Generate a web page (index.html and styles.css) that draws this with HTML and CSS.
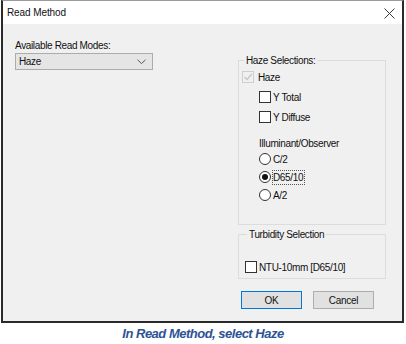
FILE: index.html
```html
<!DOCTYPE html>
<html>
<head>
<meta charset="utf-8">
<link rel="stylesheet" href="styles.css">
</head>
<body>
<div class="dialog">
  <div class="titlebar">
    <span class="title">Read Method</span>
    <svg class="close" width="11" height="11" viewBox="0 0 11 11"><path d="M0.5 0.5 L10.5 10.5 M10.5 0.5 L0.5 10.5" stroke="#3a3a3a" stroke-width="1" fill="none"/></svg>
  </div>
  <div class="content">
    <div class="main">
      <div class="left">
        <div class="label">Available Read Modes:</div>
        <div class="select">
          <span>Haze</span>
          <svg width="9" height="6" viewBox="0 0 9 6"><path d="M0.5 0.8 L4.5 4.6 L8.5 0.8" stroke="#555" stroke-width="1" fill="none"/></svg>
        </div>
      </div>
      <div class="right">
        <fieldset class="group haze">
          <legend>Haze Selections:</legend>
          <div class="row">
            <span class="box disabled"><svg width="10" height="10" viewBox="0 0 10 10"><path d="M1.5 5 L4 7.5 L8.8 2" stroke="#c4c4c4" stroke-width="1.2" fill="none"/></svg></span>
            <span class="text muted">Haze</span>
          </div>
          <div class="row sub">
            <span class="box"></span><span class="text">Y Total</span>
          </div>
          <div class="row sub">
            <span class="box"></span><span class="text">Y Diffuse</span>
          </div>
          <div class="heading sub">Illuminant/Observer</div>
          <div class="row radio-row sub">
            <span class="radio"></span><span class="text">C/2</span>
          </div>
          <div class="row radio-row sub">
            <span class="radio checked"></span><span class="text focus">D65/10</span>
          </div>
          <div class="row radio-row sub">
            <span class="radio"></span><span class="text">A/2</span>
          </div>
        </fieldset>
        <fieldset class="group turb">
          <legend>Turbidity Selection</legend>
          <div class="row">
            <span class="box"></span><span class="text">NTU-10mm [D65/10]</span>
          </div>
        </fieldset>
      </div>
    </div>
    <div class="buttons">
      <button class="btn default">OK</button>
      <button class="btn">Cancel</button>
    </div>
  </div>
</div>
<div class="caption">In Read Method, select Haze</div>
</body>
</html>
```
FILE: styles.css
```css
* { box-sizing: border-box; }
html, body { margin: 0; padding: 0; background: #ffffff; }
body { width: 406px; height: 344px; overflow: hidden; font-family: "Liberation Sans", Arial, sans-serif; }

.dialog {
  margin-left: 1px;
  width: 403px;
  height: 323px;
  border: 2px solid #2a2a2a;
  border-top: 1px solid #9a9a9a;
  display: flex;
  flex-direction: column;
  background: #f0f0f0;
}

.titlebar {
  height: 23px;
  background: #ffffff;
  display: flex;
  align-items: center;
  justify-content: space-between;
  padding: 0 7px 0 4px;
  flex: none;
}
.title { font-size: 10px; color: #111; letter-spacing: -0.1px; }
.close { display: block; margin-top: 1px; }

.content {
  flex: 1;
  display: flex;
  flex-direction: column;
  font-size: 10px;
  letter-spacing: -0.35px;
  color: #111;
}

.main { display: flex; }
.left { width: 235px; padding: 15px 0 0 12px; }
.label { line-height: 13px; height: 14px; }
.select {
  width: 138px;
  height: 17px;
  background: #e5e5e5;
  border: 1px solid #acacac;
  display: flex;
  align-items: center;
  justify-content: space-between;
  padding: 0 6px 0 3px;
}
.select span { font-size: 10px; }
.select svg { display: block; }

.right { width: 148px; padding-top: 30px; }

.group {
  margin: 0;
  padding: 0 0 0 3px;
  border: 1px solid #dcdcdc;
  min-width: 0;
}
.group legend {
  margin-left: 2px;
  padding: 0 2px;
  line-height: 13px;
  font-size: 10px;
}
.haze { padding-bottom: 20px; }
.turb { margin-top: 3px; padding-left: 6px; padding-bottom: 1px; }
.turb .row { margin-top: 16px; }

.row { display: flex; align-items: center; height: 20px; }
.radio-row { height: 18px; }
.sub { padding-left: 17px; }

.box {
  width: 12px;
  height: 12px;
  border: 1px solid #333;
  background: #fff;
  margin-right: 2px;
  display: flex;
  align-items: center;
  justify-content: center;
  flex: none;
}
.box.disabled { border-color: #cfcfcf; background: #f0f0f0; margin-right: 4px; }
.box svg { display: block; }
.muted { color: #111; }

.radio {
  width: 12px;
  height: 12px;
  border: 1px solid #333;
  border-radius: 50%;
  background: #fff;
  margin-right: 2px;
  flex: none;
  display: flex;
  align-items: center;
  justify-content: center;
}
.radio.checked::after {
  content: "";
  width: 6px;
  height: 6px;
  border-radius: 50%;
  background: #111;
}
.text { line-height: 13px; }
.focus { outline: 1px dotted #555; outline-offset: 0; padding: 0 1px 0 0; }

.heading { margin-top: 10px; line-height: 13px; height: 13px; }

.buttons {
  display: flex;
  justify-content: flex-end;
  gap: 11px;
  padding: 12px 28px 0 0;
}
.btn {
  width: 61px;
  height: 18px;
  background: #e1e1e1;
  border: 1px solid #adadad;
  font-family: "Liberation Sans", Arial, sans-serif;
  font-size: 10px;
  letter-spacing: -0.3px;
  color: #111;
  padding: 0;
  margin: 0;
  border-radius: 0;
}
.btn.default { border-color: #0078d7; }

.caption {
  text-align: center;
  font-weight: bold;
  font-style: italic;
  font-size: 13px;
  letter-spacing: -0.5px;
  color: #2e5395;
  line-height: 16px;
  margin-top: 3px;
}
```
